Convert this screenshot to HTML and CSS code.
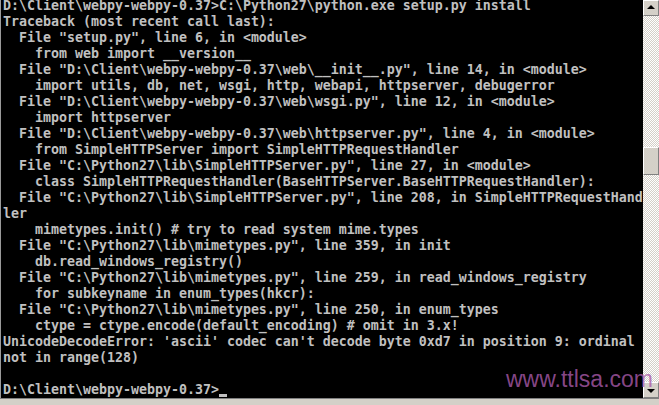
FILE: index.html
```html
<!DOCTYPE html>
<html lang="en">

<head>
    <meta charset="UTF-8">
    <meta name="viewport" content="width=device-width, initial-scale=1.0">
    <title>C:\WINDOWS\system32\cmd.exe</title>
    <link rel="stylesheet" href="styles.css">
</head>

<body>
    <div class="window">
        <div class="console">
            <pre class="screen">D:\Client\webpy-webpy-0.37&gt;C:\Python27\python.exe setup.py install
Traceback (most recent call last):
  File "setup.py", line 6, in &lt;module&gt;
    from web import __version__
  File "D:\Client\webpy-webpy-0.37\web\__init__.py", line 14, in &lt;module&gt;
    import utils, db, net, wsgi, http, webapi, httpserver, debugerror
  File "D:\Client\webpy-webpy-0.37\web\wsgi.py", line 12, in &lt;module&gt;
    import httpserver
  File "D:\Client\webpy-webpy-0.37\web\httpserver.py", line 4, in &lt;module&gt;
    from SimpleHTTPServer import SimpleHTTPRequestHandler
  File "C:\Python27\lib\SimpleHTTPServer.py", line 27, in &lt;module&gt;
    class SimpleHTTPRequestHandler(BaseHTTPServer.BaseHTTPRequestHandler):
  File "C:\Python27\lib\SimpleHTTPServer.py", line 208, in SimpleHTTPRequestHand
ler
    mimetypes.init() # try to read system mime.types
  File "C:\Python27\lib\mimetypes.py", line 359, in init
    db.read_windows_registry()
  File "C:\Python27\lib\mimetypes.py", line 259, in read_windows_registry
    for subkeyname in enum_types(hkcr):
  File "C:\Python27\lib\mimetypes.py", line 250, in enum_types
    ctype = ctype.encode(default_encoding) # omit in 3.x!
UnicodeDecodeError: 'ascii' codec can't decode byte 0xd7 in position 9: ordinal
not in range(128)

D:\Client\webpy-webpy-0.37&gt;<span class="cursor"></span></pre>

            <!-- Scrollbar -->
            <div class="scrollbar">
                <div class="sb-btn">
                    <svg viewBox="0 0 16 16" width="16" height="16"><path d="M8 5 L12 9 L4 9 Z" fill="#000" /></svg>
                </div>
                <div class="sb-track">
                    <div class="sb-thumb"></div>
                </div>
                <div class="sb-btn">
                    <svg viewBox="0 0 16 16" width="16" height="16"><path d="M4 7 L12 7 L8 11 Z" fill="#000" /></svg>
                </div>
            </div>
        </div>
        <div class="frame-bottom"></div>

        <div class="watermark">www.ttlsa.com</div>
    </div>
</body>

</html>
```

FILE: styles.css
```css
body {
    margin: 0;
    background-color: #000;
    overflow: hidden;
}

.window {
    position: relative;
    width: 659px;
    height: 405px;
}

.console {
    display: flex;
    height: 398px;
    border-left: 1px solid #9a9a9a;
    box-sizing: border-box;
}

.screen {
    flex: 1;
    margin: -2px 0 0 0;
    padding-left: 2px;
    font-family: "DejaVu Sans Mono", "Liberation Mono", monospace;
    font-weight: bold;
    font-size: 13.29px;
    line-height: 16px;
    color: #c0c0c0;
    overflow: hidden;
}

.cursor {
    display: inline-block;
    width: 8px;
    height: 3px;
    background-color: #c0c0c0;
    vertical-align: -3px;
}

.scrollbar {
    display: flex;
    flex-direction: column;
    width: 16px;
    background: repeating-conic-gradient(#ffffff 0 25%, #d4d0c8 0 50%) 0 0 / 2px 2px;
}

.sb-btn,
.sb-thumb {
    box-sizing: border-box;
    background-color: #d4d0c8;
    border-top: 1px solid #fff;
    border-left: 1px solid #fff;
    border-right: 1px solid #808080;
    border-bottom: 1px solid #808080;
}

.sb-btn {
    height: 16px;
    display: flex;
    align-items: center;
    justify-content: center;
}

.sb-btn svg {
    display: block;
    flex: none;
}

.sb-track {
    flex: 1;
}

.sb-thumb {
    margin-top: 131px;
    height: 28px;
}

.frame-bottom {
    height: 7px;
    background-color: #d4d0c8;
    border-top: 1px solid #808080;
    box-sizing: border-box;
}

.watermark {
    position: absolute;
    left: 506px;
    top: 366px;
    font-family: "Liberation Sans", Arial, sans-serif;
    font-size: 23px;
    color: rgba(170, 90, 170, 0.8);
}
```
